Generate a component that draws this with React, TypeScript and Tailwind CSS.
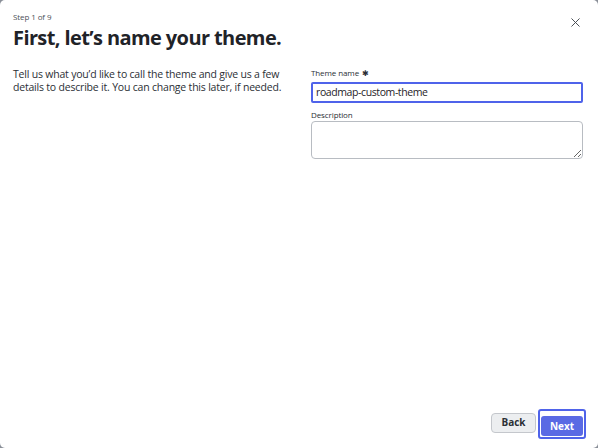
import { X } from "lucide-react"

export default function App() {
  return (
    <div className="h-[448px] w-[598px] bg-[#8a8f98]" style={{ fontFamily: '"Open Sans", sans-serif' }}>
      <div className="relative flex h-full w-full flex-col rounded-[5px] bg-white pb-[9px] pl-[13px] pr-[12px] pt-[11px] text-[#1f2328]">

        <button className="absolute right-[15px] top-[15px] text-[#3f444b]">
          <X size={15} strokeWidth={1.5} />
        </button>

        <p className="text-[8px] leading-[12px] tracking-[-0.1px] text-[#4b5058]">Step 1 of 9</p>
        <h1 className="mt-[2px] text-[20px] font-bold leading-[26px] tracking-[-0.6px]">
          First, let’s name your theme.
        </h1>

        <div className="mt-[17px] flex justify-between">
          <p className="w-[282px] text-[10.5px] leading-[13px] tracking-[-0.2px] text-[#2b2f35]">
            Tell us what you’d like to call the theme and give us a few details to describe it. You can change this later, if needed.
          </p>

          <div className="mr-[3px] w-[272px]">
            <label className="flex h-[10px] items-center gap-[3px] text-[8px] leading-[10px] tracking-[-0.1px] text-[#2b2f35]">
              Theme name <span className="text-[8px] leading-none">✱</span>
            </label>
            <input
              readOnly
              value="roadmap-custom-theme"
              className="mt-[0px] h-[21px] w-full rounded-[2px] border-2 border-[#4f63ea] px-[3px] text-[10.5px] tracking-[-0.4px] text-[#1f2328] outline-none"
            />

            <label className="mt-[6px] block text-[8px] leading-[11px] tracking-[-0.1px] text-[#2b2f35]">Description</label>
            <textarea
              readOnly
              className="mt-[1px] block h-[38px] w-full resize-y rounded-[4px] border border-[#b8bcc2] text-[11px] outline-none"
            />
          </div>
        </div>

        <div className="mt-auto flex items-center justify-end gap-[2px]">
          <button className="mb-[2px] h-[20px] w-[45px] rounded-[4px] border border-[#c4c7cc] bg-[#eceef0] text-[10px] font-bold text-[#2b2f35]">
            Back
          </button>
          <div className="rounded-[3px] border-2 border-[#4f63ea] p-[1px]">
            <button className="h-[20px] w-[42px] rounded-[3px] bg-[#5a6ae4] text-[10px] font-bold text-white">
              Next
            </button>
          </div>
        </div>

      </div>
    </div>
  )
}
